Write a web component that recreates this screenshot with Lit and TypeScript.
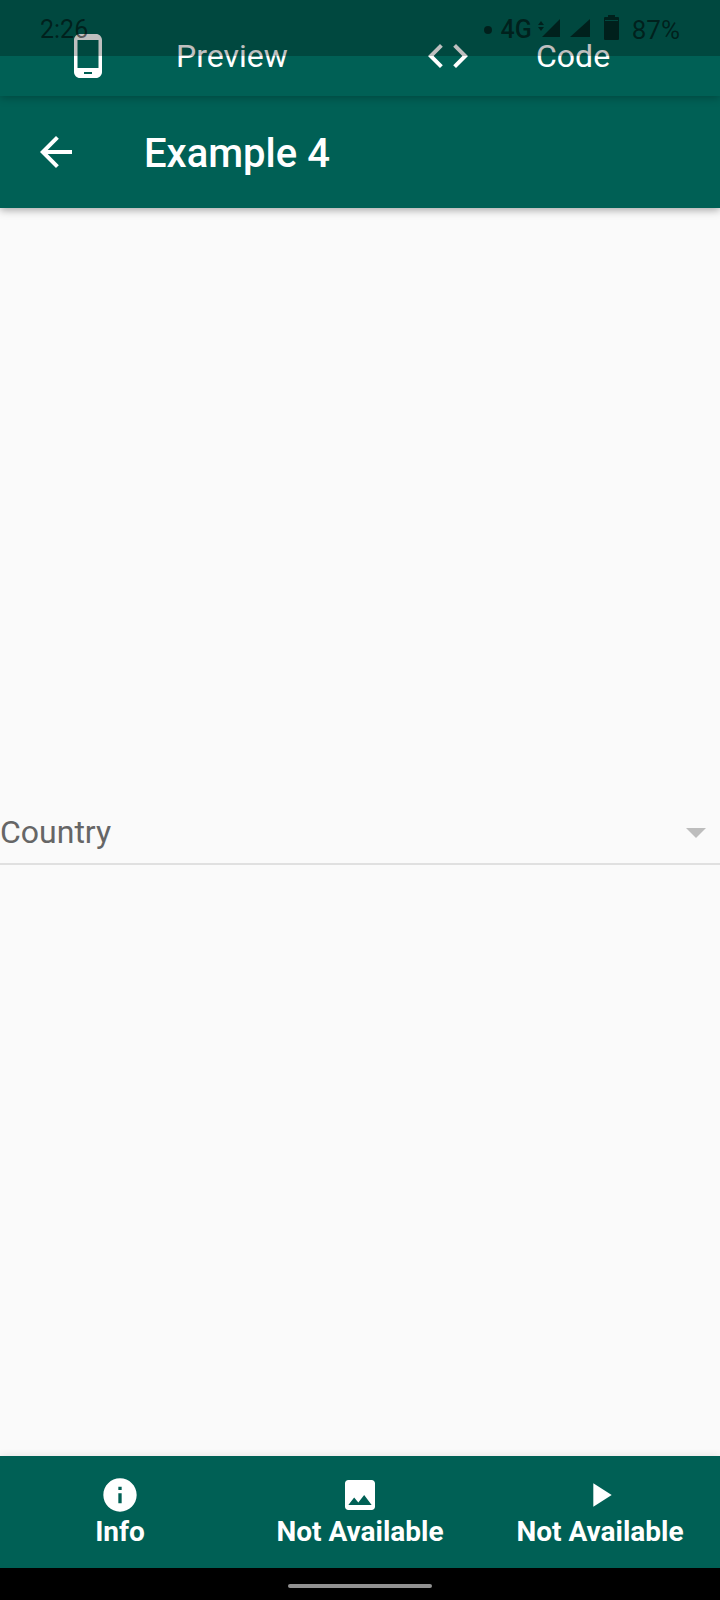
import { LitElement, html, css, svg } from "lit";
import { customElement, property, state } from "lit/decorators.js";

const icons = {
  phone: svg`<path d="M16 1H8C6.34 1 5 2.34 5 4v16c0 1.66 1.34 3 3 3h8c1.66 0 3-1.34 3-3V4c0-1.66-1.34-3-3-3zm-2 20h-4v-1h4v1zm3.25-3H6.75V4h10.5v14z"/>`,
  code: svg`<path d="M9.4 16.6L4.8 12l4.6-4.6L8 6l-6 6 6 6 1.4-1.4zm5.2 0l4.6-4.6-4.6-4.6L16 6l6 6-6 6-1.4-1.4z"/>`,
  back: svg`<path d="M20 11H7.83l5.59-5.59L12 4l-8 8 8 8 1.41-1.41L7.83 13H20v-2z"/>`,
  dropDown: svg`<path d="M7 10l5 5 5-5z"/>`,
  info: svg`<path d="M12 2C6.48 2 2 6.48 2 12s4.48 10 10 10 10-4.48 10-10S17.52 2 12 2zm1 15h-2v-6h2v6zm0-8h-2V7h2v2z"/>`,
  image: svg`<path d="M21 19V5c0-1.100-.9-2-2-2H5c-1.100 0-2 .9-2 2v14c0 1.100.9 2 2 2h14c1.100 0 2-.9 2-2zM8.500 13.500l2.500 3.010L14.500 12l4.500 6H5l3.500-4.500z"/>`,
  play: svg`<path d="M8 5v14l11-7z"/>`,
};

type IconName = keyof typeof icons;

@customElement("md-icon")
class MdIcon extends LitElement {
  static styles = css`
    :host {
      display: block;
      flex: none;
      width: 48px;
      height: 48px;
    }
    svg {
      display: block;
      width: 100%;
      height: 100%;
      fill: currentColor;
    }
  `;
  @property() name: IconName = "info";
  render() {
    return html`<svg viewBox="0 0 24 24" aria-hidden="true">${icons[this.name]}</svg>`;
  }
}

@customElement("status-bar")
class StatusBar extends LitElement {
  static styles = css`
    :host {
      display: flex;
      align-items: center;
      justify-content: space-between;
      box-sizing: border-box;
      height: 56px;
      padding: 4px 40px 0;
      background: rgba(0, 0, 0, 0.25);
      color: rgba(0, 0, 0, 0.55);
      font-size: 25px;
      line-height: 32px;
    }
    .right {
      display: flex;
      align-items: center;
      font-size: 26px;
    }
    .dot {
      width: 8px;
      height: 8px;
      margin-right: 8px;
      border-radius: 50%;
      background: currentColor;
    }
    .network {
      font-size: 25px;
      font-weight: 500;
      margin-right: 6px;
    }
    .glyphs {
      display: block;
      width: 82px;
      height: 32px;
      margin-right: 12px;
      fill: currentColor;
    }
  `;
  render() {
    return html`
      <span>2:26</span>
      <div class="right">
        <span class="dot"></span>
        <span class="network">4G</span>
        <svg class="glyphs" viewBox="0 0 82 32" aria-hidden="true">
          <path d="M22 5v18H4z" />
          <path d="M3 7l3 4H0zM0 13h6l-3 4z" />
          <path d="M52 5v18H32z" />
          <path d="M70 1h7v2h3a1 1 0 0 1 1 1v2H66V4a1 1 0 0 1 1-1h3zM66 6h1v1h13V6h1v19a1 1 0 0 1-1 1H67a1 1 0 0 1-1-1z" />
        </svg>
        <span>87%</span>
      </div>
    `;
  }
}

@customElement("app-root")
class AppRoot extends LitElement {
  static styles = css`
    :host {
      display: flex;
      flex-direction: column;
      min-height: 100vh;
      position: relative;
      background: #fafafa;
      color: #fff;
      font-family: Roboto, sans-serif;
    }
    button,
    select {
      margin: 0;
      padding: 0;
      border: 0;
      border-radius: 0;
      background: none;
      color: inherit;
      font: inherit;
    }
    .status {
      position: absolute;
      top: 0;
      left: 0;
      right: 0;
      z-index: 4;
    }
    .tabs,
    .bar,
    .nav {
      background: #006055;
    }
    .tabs {
      display: grid;
      grid-template-columns: 1fr 1fr;
      position: relative;
      z-index: 3;
      height: 96px;
      box-shadow: 0 2px 8px rgba(0, 0, 0, 0.25);
    }
    .tab {
      display: flex;
      align-items: center;
      gap: 64px;
      padding: 16px 0 0 64px;
      font-size: 32px;
      line-height: 40px;
    }
    .bar {
      display: flex;
      align-items: center;
      gap: 64px;
      position: relative;
      z-index: 2;
      height: 112px;
      padding: 0 32px;
      box-shadow: 0 2px 8px rgba(0, 0, 0, 0.35);
    }
    .title {
      margin: 0;
      padding-top: 4px;
      font-size: 40px;
      line-height: 48px;
      font-weight: 500;
    }
    .content {
      flex: 1;
      display: flex;
      flex-direction: column;
      justify-content: center;
    }
    .field {
      display: grid;
      align-items: center;
      padding-top: 2px;
      height: 62px;
      border-bottom: 2px solid #e0e0e0;
    }
    .field > * {
      grid-area: 1 / 1;
    }
    .select {
      appearance: none;
      width: 100%;
      height: 48px;
      color: #666;
      font-size: 32px;
      line-height: 48px;
    }
    .arrow {
      justify-self: end;
      color: #bdbdbd;
      pointer-events: none;
    }
    .nav {
      display: grid;
      grid-template-columns: repeat(3, 1fr);
      height: 112px;
      box-shadow: 0 0 8px rgba(0, 0, 0, 0.1);
    }
    .item {
      display: flex;
      flex-direction: column;
      align-items: center;
      justify-content: center;
      font-size: 28px;
      line-height: 34px;
      font-weight: 700;
    }
    .item md-icon {
      width: 40px;
      height: 40px;
    }
    .system {
      display: flex;
      justify-content: center;
      align-items: center;
      height: 28px;
      padding-top: 4px;
      background: #000;
    }
    .handle {
      width: 144px;
      height: 4px;
      border-radius: 2px;
      background: #919191;
    }
  `;

  @state() private country = "";

  private tabs: { icon: IconName; label: string }[] = [
    { icon: "phone", label: "Preview" },
    { icon: "code", label: "Code" },
  ];

  private items: { icon: IconName; label: string }[] = [
    { icon: "info", label: "Info" },
    { icon: "image", label: "Not Available" },
    { icon: "play", label: "Not Available" },
  ];

  private pick(e: Event) {
    this.country = (e.target as HTMLSelectElement).value;
  }

  render() {
    return html`
      <status-bar class="status"></status-bar>
      <div class="tabs">
        ${this.tabs.map(
          (t) => html`<button class="tab"><md-icon .name=${t.icon}></md-icon><span>${t.label}</span></button>`
        )}
      </div>
      <header class="bar">
        <button aria-label="Back"><md-icon name="back"></md-icon></button>
        <h1 class="title">Example 4</h1>
      </header>
      <main class="content">
        <div class="field">
          <select class="select" aria-label="Country" .value=${this.country} @change=${this.pick}>
            <option value="">Country</option>
          </select>
          <md-icon class="arrow" name="dropDown"></md-icon>
        </div>
      </main>
      <nav class="nav">
        ${this.items.map(
          (i) => html`<button class="item"><md-icon .name=${i.icon}></md-icon><span>${i.label}</span></button>`
        )}
      </nav>
      <div class="system"><span class="handle"></span></div>
    `;
  }
}
